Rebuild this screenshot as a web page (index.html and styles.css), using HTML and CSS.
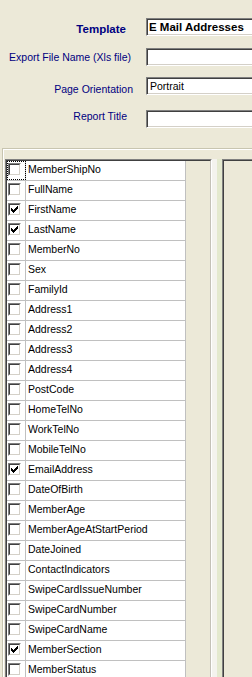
FILE: index.html
```html
<!DOCTYPE html>
<html lang="en">
<head>
    <meta charset="UTF-8">
    <title>Export Members</title>
    <link rel="stylesheet" href="styles.css">
</head>
<body>

    <div class="opcoes">
        <div class="campo campo-template">
            <div class="rotulo rot-template">Template</div>
            <div class="caixa caixa-bold">E Mail Addresses</div>
        </div>
        <div class="campo campo-export">
            <div class="rotulo rot-export">Export File Name (Xls file)</div>
            <div class="caixa"></div>
        </div>
        <div class="campo campo-page">
            <div class="rotulo rot-page">Page Orientation</div>
            <div class="caixa">Portrait</div>
        </div>
        <div class="campo campo-report">
            <div class="rotulo rot-report">Report Title</div>
            <div class="caixa"></div>
        </div>
    </div>

    <div class="moldura">
        <div class="lista">
            <div class="lista-in" id="campos"></div>
        </div>
        <div class="divisor"></div>
        <div class="painel">
            <div class="painel-in"></div>
        </div>
    </div>

    <script>
        // campos disponíveis para exportar
        const campos = [
            ['MemberShipNo', false], ['FullName', false], ['FirstName', true],
            ['LastName', true], ['MemberNo', false], ['Sex', false],
            ['FamilyId', false], ['Address1', false], ['Address2', false],
            ['Address3', false], ['Address4', false], ['PostCode', false],
            ['HomeTelNo', false], ['WorkTelNo', false], ['MobileTelNo', false],
            ['EmailAddress', true], ['DateOfBirth', false], ['MemberAge', false],
            ['MemberAgeAtStartPeriod', false], ['DateJoined', false],
            ['ContactIndicators', false], ['SwipeCardIssueNumber', false],
            ['SwipeCardNumber', false], ['SwipeCardName', false],
            ['MemberSection', true], ['MemberStatus', false]
        ];

        const marca = '<svg width="9" height="9" viewBox="0 0 9 9" shape-rendering="crispEdges">' +
            '<path fill="#000" d="M7 1h1v1h-1z M6 2h2v1h-2z M1 3h1v1h-1z M5 3h3v1h-3z M1 4h2v1h-2z M4 4h3v1h-3z M1 5h5v1h-5z M2 6h3v1h-3z M3 7h1v1h-1z"/></svg>';

        const lista = document.getElementById('campos');
        campos.forEach(function (c, i) {
            const linha = document.createElement('div');
            linha.className = 'linha';
            linha.innerHTML =
                '<div class="cel-check' + (i === 0 ? ' foco' : '') + '">' +
                '<span class="check"><span class="check-in">' + (c[1] ? marca : '') + '</span></span></div>' +
                '<div class="cel-nome">' + c[0] + '</div>';
            lista.appendChild(linha);
        });
    </script>

</body>
</html>
```
FILE: styles.css
```css
html, body {
    margin: 0;
    height: 677px;
    overflow: hidden;
}
body {
    background: #ece9d8;
    font-family: "Liberation Sans", Arial, sans-serif;
    font-size: 10.5px;
    color: #000;
    width: 252px;
}
.opcoes {
    padding-top: 18px;
}
.campo {
    display: flex;
    align-items: flex-start;
    height: 18px;
}
.campo-export { margin-top: 12px; }
.campo-page { margin-top: 11px; }
.campo-report { margin-top: 15px; }
.rotulo {
    width: 146px;
    flex: none;
    box-sizing: border-box;
    text-align: right;
    color: #000080;
    line-height: 18px;
    white-space: nowrap;
}
.rot-template {
    font-weight: bold;
    font-size: 11.5px;
    padding-right: 20px;
    padding-top: 2px;
}
.rot-export { padding-right: 15px; }
.rot-page { padding-right: 13px; padding-top: 3px; }
.rot-report { padding-right: 19px; margin-top: -3px; }
.caixa {
    flex: 1;
    min-width: 0;
    height: 18px;
    box-sizing: border-box;
    background: #fff;
    border: 1px solid;
    border-right: none;
    border-color: #808080 #fff #fff #808080;
    box-shadow: inset 1px 1px #404040, inset 0 -1px #d4d0c8;
    padding: 1px 0 0 3px;
    line-height: 15px;
    white-space: nowrap;
    overflow: hidden;
}
.caixa-bold {
    font-weight: bold;
    font-size: 11.5px;
    padding-left: 2px;
}
.moldura {
    margin: 20px 0 0 2px;
    height: 518px;
    border-top: 1px solid #c8c5b0;
    border-left: 1px solid #c8c5b0;
    box-shadow: inset 1px 1px #fff;
    padding: 10px 0 0 2px;
    display: flex;
    align-items: stretch;
}
.lista {
    width: 207px;
    flex: none;
    box-sizing: border-box;
    border: 1px solid;
    border-bottom: none;
    border-color: #808080 #fff #fff #808080;
}
.lista-in {
    height: 100%;
    box-sizing: border-box;
    overflow: hidden;
    border: 1px solid;
    border-bottom: none;
    border-color: #404040 #c4c1b8 #c4c1b8 #404040;
    background: #ece9d8;
}
.linha {
    display: flex;
    width: 179px;
    height: 19px;
    border-bottom: 1px solid #c0c0c0;
    background: #fff;
}
.cel-check {
    width: 19px;
    flex: none;
    border-right: 1px solid #c0c0c0;
    box-sizing: border-box;
    padding-top: 2px;
    padding-left: 1px;
}
.foco {
    outline: 1px dotted #000;
    outline-offset: -1px;
}
.check {
    display: block;
    width: 13px;
    height: 13px;
    box-sizing: border-box;
    border: 1px solid;
    border-color: #808080 #fff #fff #808080;
}
.check-in {
    display: block;
    width: 11px;
    height: 11px;
    box-sizing: border-box;
    border: 1px solid;
    border-color: #404040 #d4d0c8 #d4d0c8 #404040;
    background: #fff;
}
.check-in svg {
    display: block;
}
.cel-nome {
    flex: 1;
    border-right: 1px solid #c0c0c0;
    padding-left: 2px;
    line-height: 14px;
    padding-top: 1px;
    white-space: nowrap;
    overflow: hidden;
}
.divisor {
    width: 10px;
    flex: none;
    background: linear-gradient(to right, #f4f3ee 0 5px, #e4e9cf 5px 10px);
}
.painel {
    flex: 1;
    min-width: 0;
    border-top: 1px solid #808080;
    border-left: 1px solid #808080;
}
.painel-in {
    height: 100%;
    border-top: 1px solid #404040;
    border-left: 1px solid #404040;
}
```
